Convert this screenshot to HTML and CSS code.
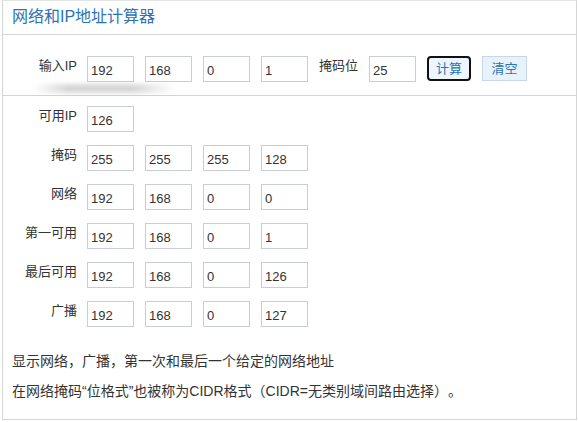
FILE: index.html
```html
<!DOCTYPE html>
<html lang="zh">
<head>
<meta charset="utf-8">
<title>网络和IP地址计算器</title>
<link rel="stylesheet" href="styles.css">
</head>
<body>
<div class="panel">
  <div class="panel-head">网络和IP地址计算器</div>
  <div class="input-section">
    <div class="row">
      <label class="lbl">输入IP</label>
      <input class="box" value="192">
      <input class="box" value="168">
      <input class="box" value="0">
      <input class="box" value="1">
      <label class="lbl-inline">掩码位</label>
      <input class="box" value="25">
      <button class="btn btn-calc">计算</button>
      <button class="btn btn-clear">清空</button>
    </div>
    <div class="smudge"></div>
  </div>
  <div class="result-section">
    <div class="row">
      <label class="lbl">可用IP</label>
      <input class="box" value="126">
    </div>
    <div class="row">
      <label class="lbl">掩码</label>
      <input class="box" value="255">
      <input class="box" value="255">
      <input class="box" value="255">
      <input class="box" value="128">
    </div>
    <div class="row">
      <label class="lbl">网络</label>
      <input class="box" value="192">
      <input class="box" value="168">
      <input class="box" value="0">
      <input class="box" value="0">
    </div>
    <div class="row">
      <label class="lbl">第一可用</label>
      <input class="box" value="192">
      <input class="box" value="168">
      <input class="box" value="0">
      <input class="box" value="1">
    </div>
    <div class="row">
      <label class="lbl">最后可用</label>
      <input class="box" value="192">
      <input class="box" value="168">
      <input class="box" value="0">
      <input class="box" value="126">
    </div>
    <div class="row">
      <label class="lbl">广播</label>
      <input class="box" value="192">
      <input class="box" value="168">
      <input class="box" value="0">
      <input class="box" value="127">
    </div>
    <div class="notes">
      <p class="note">显示网络，广播，第一次和最后一个给定的网络地址</p>
      <p class="note">在网络掩码“位格式”也被称为CIDR格式（CIDR=无类别域间路由选择）。</p>
    </div>
  </div>
</div>
</body>
</html>
```
FILE: styles.css
```css
html, body {
  margin: 0;
  padding: 0;
  background: #fff;
}
body {
  font-family: "Liberation Sans", Arial, "Noto Sans CJK SC", sans-serif;
  color: #333;
  font-size: 13px;
  text-spacing-trim: space-all;
}
.panel {
  margin-left: 2px;
  width: 575px;
  height: 420px;
  box-sizing: border-box;
  border: 1px solid #d4d4d4;
  border-top-color: #e4e4e4;
}
.panel-head {
  height: 34px;
  box-sizing: border-box;
  border-bottom: 1px solid #d4d4d4;
  padding-left: 9px;
  line-height: 32px;
  font-size: 16px;
  color: #2c73b4;
}
.input-section {
  position: relative;
  padding: 21px 0 13px;
  border-bottom: 1px solid #d4d4d4;
}
.result-section {
  padding-top: 10px;
  display: flex;
  flex-direction: column;
  gap: 13px;
}
.row {
  display: flex;
  align-items: flex-start;
  gap: 11px;
  height: 26px;
}
.lbl {
  width: 74px;
  margin-right: -1px;
  text-align: right;
  line-height: 20px;
  font-size: 13px;
  color: #333;
}
.lbl-inline {
  width: 39px;
  line-height: 20px;
  font-size: 13px;
  color: #333;
}
.box {
  width: 47px;
  height: 26px;
  box-sizing: border-box;
  margin: 0;
  border: 1px solid #c9ced5;
  border-radius: 0;
  padding: 3px 3px 0 3px;
  font-family: "Liberation Sans", Arial, sans-serif;
  font-size: 13px;
  color: #333;
  background: #fff;
  outline: none;
}
.btn {
  margin: 0;
  height: 25px;
  width: 44px;
  box-sizing: border-box;
  font-family: "Liberation Sans", Arial, "Noto Sans CJK SC", sans-serif;
  font-size: 13px;
  color: #2c73b4;
  padding: 0;
  line-height: 20px;
}
.btn-calc {
  border: 2px solid #111;
  border-radius: 4px;
  background: #eef5fc;
}
.btn-clear {
  width: 45px;
  border: 1px solid #c6d7ea;
  border-radius: 0;
  background: #e8f2fb;
}
.smudge {
  position: absolute;
  left: 30px;
  top: 49px;
  width: 142px;
  height: 9px;
  background: linear-gradient(to right, rgba(190,190,190,0) 0%, rgba(180,180,180,0.55) 25%, rgba(180,180,180,0.55) 70%, rgba(210,210,210,0) 100%);
  filter: blur(2px);
}
.notes {
  margin-top: 11px;
  padding-left: 9px;
  display: flex;
  flex-direction: column;
  gap: 10px;
}
.note {
  margin: 0;
  line-height: 20px;
  font-size: 14px;
  color: #333;
  text-spacing-trim: space-all;
}
```
